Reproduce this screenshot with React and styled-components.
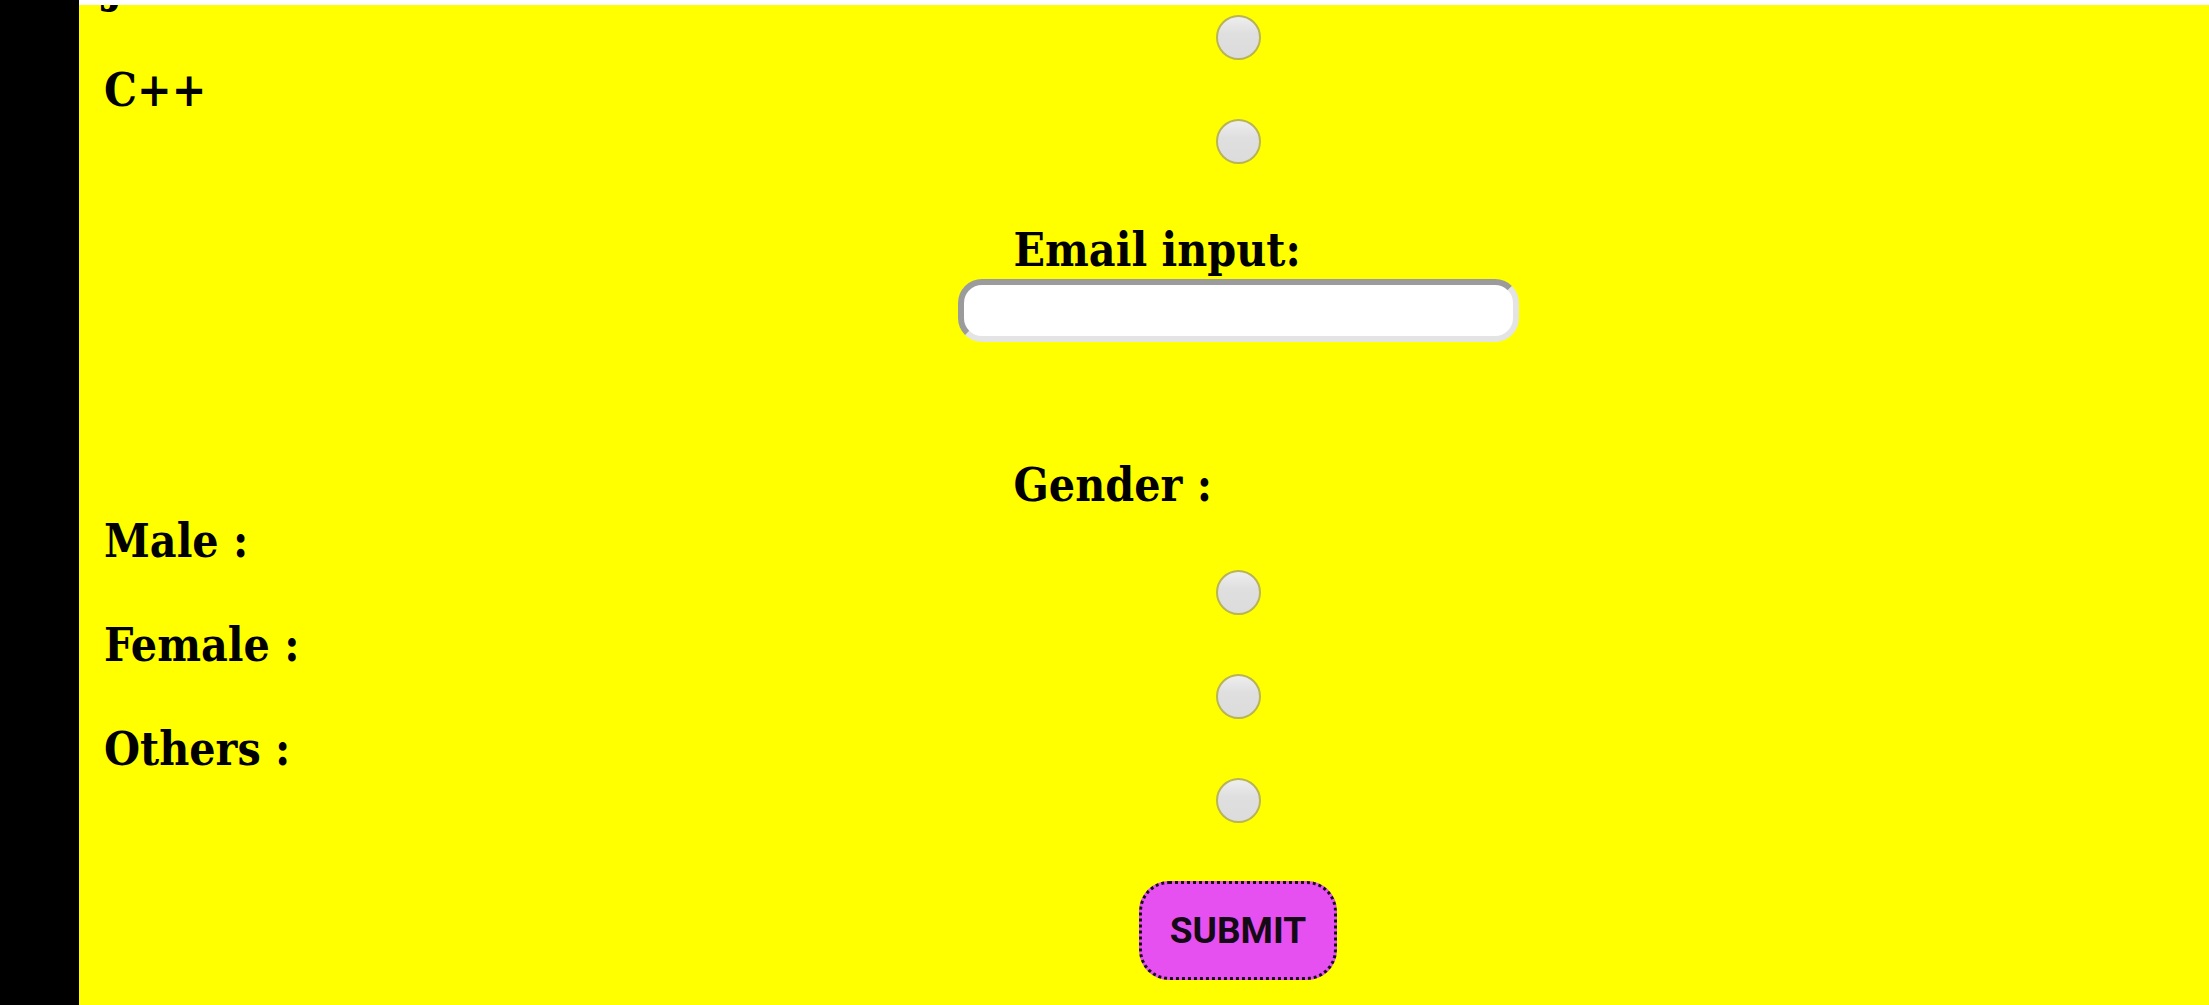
import React from "react";
import styled, { createGlobalStyle } from "styled-components";

const GlobalStyle = createGlobalStyle`
  html, body {
    margin: 0;
    padding: 0;
    background: #000;
  }
  #root {
    height: 1005px;
  }
  * { box-sizing: border-box; }
`;

const Page = styled.div`
  display: grid;
  grid-template-columns: 79px 1fr;
  height: 1005px;
  background: #000;
`;

const Main = styled.main`
  display: flex;
  flex-direction: column;
  background: #ffffff;
  padding-top: 5px;
  min-width: 0;
`;

const Panel = styled.div`
  flex: 1;
  background: #ffff00;
  overflow: hidden;
`;

const Form = styled.form`
  display: grid;
  grid-template-columns: 188px 1fr;
  margin-top: -42px;
  font-family: "DejaVu Serif Condensed", "DejaVu Serif", "Liberation Serif", serif;
  font-stretch: condensed;
  font-weight: 700;
  color: #000;
`;

const OptionLabel = styled.label`
  grid-column: 1 / -1;
  display: block;
  padding-left: 25px;
  font-size: 46px;
  line-height: 46px;
  height: 46px;
  white-space: nowrap;
`;

const Radio = styled.input.attrs({ type: "radio" })`
  grid-column: 2;
  justify-self: center;
  appearance: none;
  -webkit-appearance: none;
  width: 45px;
  height: 45px;
  margin: 6px 0 7px;
  border-radius: 50%;
  border: 2px solid #b9b455;
  background: linear-gradient(#eeeeee 0%, #dfdfdf 40%, #dcdcdc 100%);
`;

const FieldBlock = styled.div`
  grid-column: 2;
  justify-self: center;
  width: 561px;
  display: flex;
  flex-direction: column;
  margin-top: ${(p) => p.$top}px;
  margin-bottom: ${(p) => p.$bottom || 0}px;
`;

const Heading = styled.label`
  display: block;
  padding-left: 56px;
  font-size: 46px;
  line-height: 46px;
  height: 46px;
  white-space: nowrap;
`;

const EmailInput = styled.input.attrs({ type: "email" })`
  margin-top: 6px;
  width: 561px;
  height: 63px;
  border-radius: 24px;
  border-width: 6px;
  border-style: solid;
  border-color: #9b9b9b #e4e4e4 #e4e4e4 #9b9b9b;
  background: #ffffff;
  outline: none;
  padding: 0 18px;
  font-size: 28px;
`;

const SubmitButton = styled.button`
  grid-column: 2;
  justify-self: center;
  margin-top: 51px;
  width: 198px;
  height: 99px;
  border: 3px dotted #1a0a1a;
  border-radius: 30px;
  background: #e650f0;
  color: #140a16;
  font-family: Roboto, "Noto Sans", sans-serif;
  font-weight: 700;
  font-size: 37px;
  padding: 0;
  cursor: pointer;
`;

const Option = ({ name, value, children }) => (
  <>
    <OptionLabel htmlFor={`${name}-${value}`}>{children}</OptionLabel>
    <Radio id={`${name}-${value}`} name={name} value={value} />
  </>
);

export default function App() {
  return (
    <>
      <GlobalStyle />
      <Page>
        <div />
        <Main>
          <Panel>
            <Form onSubmit={(e) => e.preventDefault()}>
              <Option name="lang" value="java">Java</Option>
              <Option name="lang" value="cpp">C++</Option>

              <FieldBlock $top={56}>
                <Heading htmlFor="email">Email input:</Heading>
                <EmailInput id="email" />
              </FieldBlock>

              <FieldBlock $top={120} $bottom={10}>
                <Heading as="div">Gender :</Heading>
              </FieldBlock>

              <Option name="gender" value="male">Male :</Option>
              <Option name="gender" value="female">Female :</Option>
              <Option name="gender" value="others">Others :</Option>

              <SubmitButton type="submit">SUBMIT</SubmitButton>
            </Form>
          </Panel>
        </Main>
      </Page>
    </>
  );
}
